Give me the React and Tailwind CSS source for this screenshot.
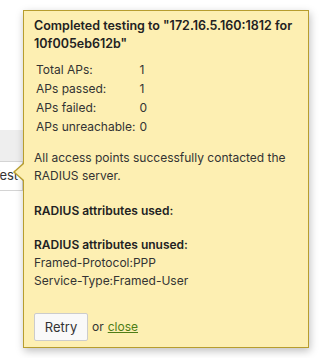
import React from "react";

const stats = [
  { label: "Total APs:", value: 1 },
  { label: "APs passed:", value: 1 },
  { label: "APs failed:", value: 0 },
  { label: "APs unreachable:", value: 0 },
];

const App = () => {
  return (
    <div
      className="relative w-[327px] h-[358px] bg-white overflow-hidden text-[#333333]"
      style={{ fontFamily: "Inter, 'Noto Sans', sans-serif" }}
    >
      {/* page behind the popup */}
      <div className="pt-[130px]">
        <div className="h-[31px] w-[200px] bg-[#eeeeee]" />
        <div className="flex">
          <div className="-ml-[12px] h-[30px] px-[4px] flex items-center border-y border-r border-[#d4d4d4] bg-white text-[13px] text-[#333333]">
            Test
          </div>
        </div>
      </div>

      {/* popup */}
      <div className="absolute left-[23px] top-[10px] w-[286px] h-[338px] bg-[#fdefb2] border border-[#b79d2e] shadow-[1px_3px_8px_rgba(0,0,0,0.25)] pl-[10px] pr-[10px] pt-[6px] text-[12px] leading-[18px]">
        {/* arrow */}
        <div className="absolute -left-[11px] top-[152px] w-0 h-0 border-y-[9px] border-y-transparent border-r-[10px] border-r-[#b79d2e]" />
        <div className="absolute -left-[9px] top-[153px] w-0 h-0 border-y-[8px] border-y-transparent border-r-[9px] border-r-[#fdefb2]" />

        <h2 className="font-semibold text-[12.5px] text-[#222222]">
          Completed testing to "172.16.5.160:1812 for 10f005eb612b"
        </h2>

        <table className="mt-[7px] border-separate border-spacing-0">
          <tbody>
            {stats.map((s) => (
              <tr key={s.label} className="h-[19px]">
                <td className="pl-[2px] pr-[2px] w-[103px] whitespace-nowrap">{s.label}</td>
                <td className="px-[2px]">{s.value}</td>
              </tr>
            ))}
          </tbody>
        </table>

        <p className="mt-[13px]">
          All access points successfully contacted the RADIUS server.
        </p>

        <p className="mt-[17px] font-semibold text-[#222222]">
          RADIUS attributes used:
        </p>

        <p className="mt-[16px] font-semibold text-[#222222]">
          RADIUS attributes unused:
        </p>
        <div>Framed-Protocol:PPP</div>
        <div>Service-Type:Framed-User</div>

        <div className="mt-[23px] flex items-center gap-[4px]">
          <button className="h-[28px] w-[54px] bg-[#f9f9f9] border border-[#cccccc] rounded-[2px] text-[13px] text-[#333333]">
            Retry
          </button>
          <span>or</span>
          <a href="#" className="text-[#4e7d16] underline">
            close
          </a>
        </div>
      </div>
    </div>
  );
};

export default App;
